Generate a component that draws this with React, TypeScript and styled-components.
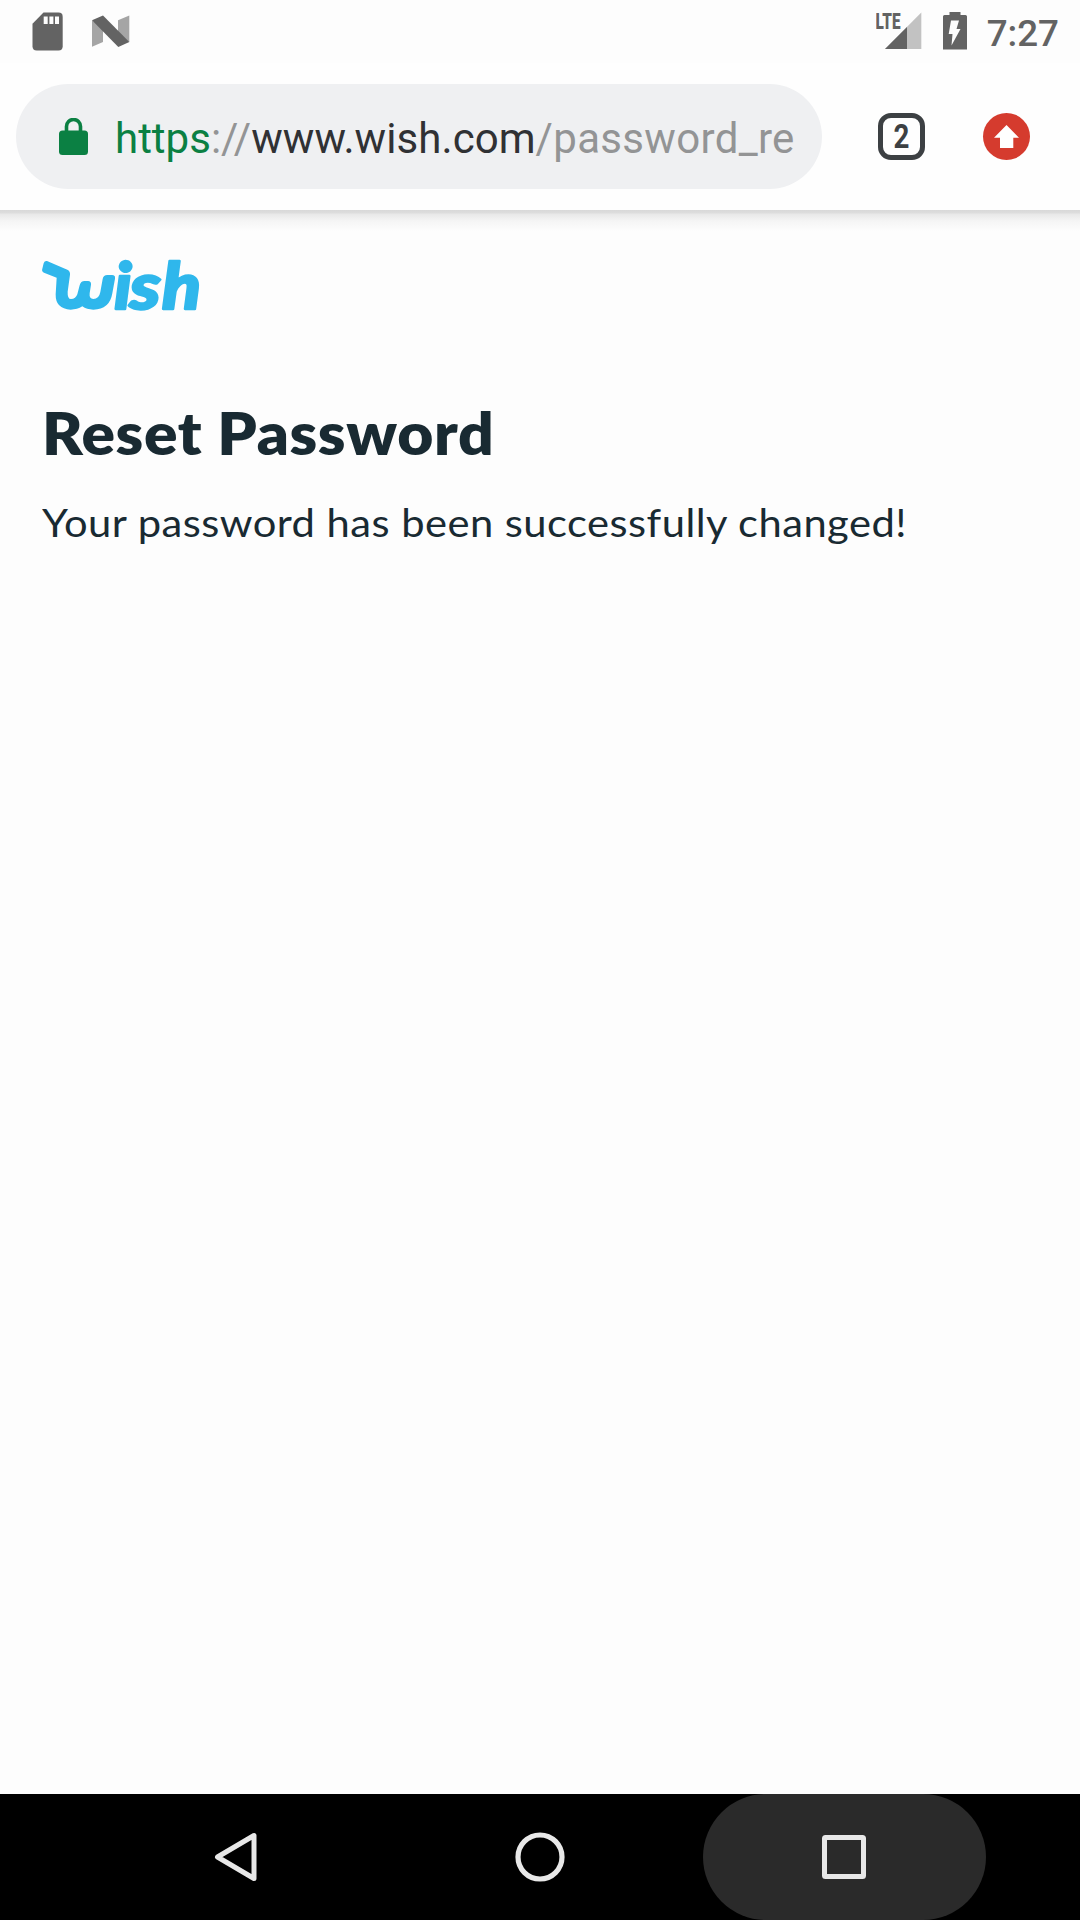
import React from "react";
import styled, { createGlobalStyle } from "styled-components";

const GlobalStyle = createGlobalStyle`
  * { box-sizing: border-box; }
  body { margin: 0; background: #fdfdfd; }
  svg { display: block; flex: none; }
`;

const Screen = styled.div`
  width: 1080px;
  height: 1920px;
  display: flex;
  flex-direction: column;
  overflow: hidden;
  background: #fdfdfd;
  font-family: Roboto, sans-serif;
`;

const StatusBar = styled.header`
  height: 63px;
  flex: none;
  display: flex;
  justify-content: space-between;
  padding: 0 21px 0 32px;
  color: #636363;
`;

const StatusGroup = styled.div`
  display: flex;
  align-items: flex-start;
`;

const Clock = styled.time`
  margin: 12px 0 0 18px;
  font-size: 36.75px;
  line-height: 43px;
  font-weight: 500;
`;

const Toolbar = styled.div`
  height: 147px;
  flex: none;
  display: flex;
  align-items: center;
  padding: 0 50px 0 16px;
  background: #fefefe;
`;

const AddressBar = styled.div`
  width: 806px;
  height: 105px;
  border-radius: 53px;
  background: #eff0f2;
  display: flex;
  align-items: center;
  padding: 0 26px 0 43px;
`;

const Url = styled.div`
  flex: 1;
  min-width: 0;
  margin-left: 26px;
  overflow: hidden;
  white-space: nowrap;
  font-size: 42px;
  line-height: 50px;
  padding-top: 4px;
  color: #939495;
`;

const Scheme = styled.span`
  color: #0b8043;
`;

const Host = styled.span`
  color: #303134;
  letter-spacing: 0.07px;
`;

const UrlPath = styled.span`
  letter-spacing: 0.32px;
`;

const TabCounter = styled.div`
  width: 47px;
  height: 47px;
  margin-left: 56px;
  border: 5px solid #3c4043;
  border-radius: 13px;
  display: flex;
  align-items: center;
  justify-content: center;
  padding-right: 1px;
  color: #3c4043;
  font: 700 33px/37px Roboto, sans-serif;
`;

const Digit = styled.span`
  transform: scaleX(0.84);
`;

const UpdateBadge = styled.div`
  width: 47px;
  height: 47px;
  margin-left: 58px;
  border-radius: 50%;
  background: #d53b2e;
`;

const ToolbarShadow = styled.div`
  height: 21px;
  flex: none;
  background: linear-gradient(#d9d9d9 0, #dddddd 3px, #e8e8e8 4px, #f5f5f5 11px, #fdfdfd 21px);
`;

const Page = styled.main`
  flex: 1;
  display: flex;
  flex-direction: column;
  align-items: flex-start;
  padding: 9px 30px 0;
  color: #192a32;
  font-family: Lato, sans-serif;
`;

const Title = styled.h1`
  margin: 68px 0 0 12px;
  font-size: 58px;
  line-height: 70px;
  font-weight: 800;
  letter-spacing: 0.6px;
  white-space: nowrap;
  transform: scaleX(1.073);
  transform-origin: left;
`;

const Message = styled.p`
  margin: 31px 0 0 12px;
  font-size: 39px;
  line-height: 47px;
  font-weight: 400;
  letter-spacing: 0.44px;
  white-space: nowrap;
  transform: scaleX(1.069);
  transform-origin: left;
`;

const NavBar = styled.nav`
  height: 126px;
  flex: none;
  display: flex;
  justify-content: center;
  background: #000;
  gap: 21px;
`;

const NavButton = styled.div<{ $pressed?: boolean }>`
  width: 283px;
  height: 126px;
  border-radius: 63px;
  display: flex;
  align-items: center;
  justify-content: center;
  background: ${(p) => (p.$pressed ? "#2a2a2a" : "transparent")};
`;

const SdCard = () => (
  <svg width="32" height="63" viewBox="32 0 32 63">
    <path d="M43.5 12.5H58.5Q62.7 12.5 62.7 16.7V46.3Q62.7 50.5 58.5 50.5H36.7Q32.5 50.5 32.5 46.3V23.8Z" fill="#636363" />
    <path d="M43.7 16.5h4v7.5h-4zM49.4 16.5h4v7.5h-4zM55 16.5h4v7.5h-4z" fill="#fdfdfd" />
  </svg>
);

const NougatIcon = () => (
  <svg width="70" height="63" viewBox="64 0 70 63">
    <path d="M92 20.5L103 27V42L92 46.7ZM118 20.3L129.3 15.5V42L118 36Z" fill="#a5a5a5" />
    <path d="M92 20.3L103 15.6L129.3 42L118.3 47Z" fill="#636363" />
  </svg>
);

const Signal = () => (
  <svg width="46" height="63" viewBox="876 0 46 63">
    <path d="M921.3 12.5V49H885Z" fill="#c2c2c2" />
    <path d="M907 27V49H885Z" fill="#636363" />
    <text x="875.5" y="29" fontSize="21.5" fontWeight="900" textLength="25" lengthAdjust="spacingAndGlyphs" fill="#636363" stroke="#fdfdfd" strokeWidth="1.5" paintOrder="stroke">LTE</text>
  </svg>
);

const Battery = () => (
  <svg width="47" height="63" viewBox="922 0 47 63">
    <path d="M949.5 12H960.5V15H965.5Q967 15 967 16.5V49.5H943V16.5Q943 15 944.5 15H949.5Z" fill="#636363" />
    <path d="M951 20.5H959L956.5 29H960.5L951.5 45.5L952.5 34H948.7Z" fill="#fdfdfd" />
  </svg>
);

const Lock = () => (
  <svg width="30" height="38" viewBox="59 117 30 38">
    <path d="M66.5 131V125.5a7 7 0 0 1 14 0V131" fill="none" stroke="#0b8043" strokeWidth="3.6" />
    <rect x="59" y="129.5" width="29" height="24.5" rx="3.5" fill="#0b8043" />
  </svg>
);

const UpArrow = () => (
  <svg width="47" height="47" viewBox="0 0 47 47">
    <path d="M23.5 12L36 24.8H30.3V35H17V24.8H11Z" fill="#fff" />
  </svg>
);

const WishLogo = () => (
  <svg width="190" height="90" viewBox="0 0 570 270" fill="#2fb7ec">
    <path d="M51 63L112 89Q121 93 120 104L113 155Q112 177 123 177Q137 177 142 163L149 136Q152 123 164 123H174Q184 123 183 134L179 160Q177 177 190 177Q207 177 211 156L218 117Q220 105 232 105H246Q257 105 255 116L247 160Q239 209 190 209Q170 209 157 199Q142 209 122 209Q76 207 77 163L80 113L42 98Q34 94 37 86L41 70Q44 61 51 63Z" />
    <g fontFamily="Lato" fontStyle="italic" fontWeight="900" fontSize="195" stroke="#2fb7ec" strokeWidth="7" strokeLinejoin="round">
      <text transform="translate(253 206) scale(1.06 1)">i</text>
      <text transform="translate(299 208) scale(1.17 1)">s</text>
      <text transform="translate(396 206) scale(1.1 1)">h</text>
    </g>
  </svg>
);

export default function App() {
  return (
    <Screen>
      <GlobalStyle />
      <StatusBar>
        <StatusGroup>
          <SdCard />
          <NougatIcon />
        </StatusGroup>
        <StatusGroup>
          <Signal />
          <Battery />
          <Clock>7:27</Clock>
        </StatusGroup>
      </StatusBar>
      <Toolbar>
        <AddressBar>
          <Lock />
          <Url>
            <Scheme>https</Scheme>://<Host>www.wish.com</Host>
            <UrlPath>/password_res</UrlPath>
          </Url>
        </AddressBar>
        <TabCounter>
          <Digit>2</Digit>
        </TabCounter>
        <UpdateBadge>
          <UpArrow />
        </UpdateBadge>
      </Toolbar>
      <ToolbarShadow />
      <Page>
        <WishLogo />
        <Title>Reset Password</Title>
        <Message>Your password has been successfully changed!</Message>
      </Page>
      <NavBar>
        <NavButton>
          <svg width="50" height="56" viewBox="0 0 50 56">
            <path d="M43 6.5V49.5L6.5 28Z" fill="none" stroke="#e8e8e8" strokeWidth="5" strokeLinejoin="round" />
          </svg>
        </NavButton>
        <NavButton>
          <svg width="50" height="50" viewBox="0 0 50 50">
            <circle cx="25" cy="25" r="22" fill="none" stroke="#e8e8e8" strokeWidth="5.2" />
          </svg>
        </NavButton>
        <NavButton $pressed>
          <svg width="44" height="44" viewBox="0 0 44 44">
            <rect x="2.5" y="2.5" width="39" height="39" rx="1" fill="none" stroke="#e8e8e8" strokeWidth="5" strokeLinejoin="round" />
          </svg>
        </NavButton>
      </NavBar>
    </Screen>
  );
}
